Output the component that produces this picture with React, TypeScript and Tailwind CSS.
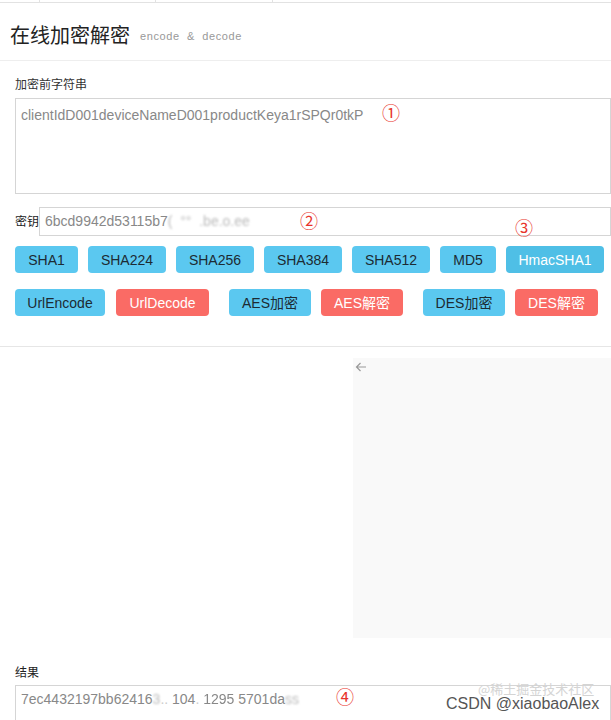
import React from 'react';

const font = { fontFamily: '"Liberation Sans", Arial, "Noto Sans CJK SC", sans-serif' };

type Btn = { label: string; tone: 'info' | 'danger' | 'active'; w: string; ml?: string };

const row1: Btn[] = [
  { label: 'SHA1', tone: 'info', w: 'w-[63px]' },
  { label: 'SHA224', tone: 'info', w: 'w-[78px]' },
  { label: 'SHA256', tone: 'info', w: 'w-[78px]' },
  { label: 'SHA384', tone: 'info', w: 'w-[78px]' },
  { label: 'SHA512', tone: 'info', w: 'w-[78px]' },
  { label: 'MD5', tone: 'info', w: 'w-[56px]' },
  { label: 'HmacSHA1', tone: 'active', w: 'w-[98px]' },
];

const row2: Btn[] = [
  { label: 'UrlEncode', tone: 'info', w: 'w-[90px]' },
  { label: 'UrlDecode', tone: 'danger', w: 'w-[93px]', ml: 'ml-[11px]' },
  { label: 'AES加密', tone: 'info', w: 'w-[82px]', ml: 'ml-[20px]' },
  { label: 'AES解密', tone: 'danger', w: 'w-[82px]', ml: 'ml-[10px]' },
  { label: 'DES加密', tone: 'info', w: 'w-[82px]', ml: 'ml-[20px]' },
  { label: 'DES解密', tone: 'danger', w: 'w-[83px]', ml: 'ml-[10px]' },
];

function ActionButton({ b, first }: { b: Btn; first?: boolean }) {
  const tone =
    b.tone === 'danger'
      ? 'bg-[#fa6b65] text-white'
      : b.tone === 'active'
        ? 'bg-[#4fbfe6] text-white'
        : 'bg-[#5bc8f0] text-[#1d2b33]';
  return (
    <button
      type="button"
      className={`h-[27px] shrink-0 rounded-[4px] text-[14px] leading-none ${b.w} ${tone} ${first ? '' : b.ml ?? 'ml-[10px]'}`}
    >
      {b.label}
    </button>
  );
}

function Circled({ n, className }: { n: string; className: string }) {
  return (
    <span className={`absolute text-[18px] leading-none text-[#e8342b] ${className}`} style={{ fontFamily: '"Noto Sans CJK SC", sans-serif' }}>
      {n}
    </span>
  );
}

export default function App() {
  return (
    <div className="relative h-[720px] w-[611px] overflow-hidden bg-white text-[#333]" style={font}>
      {/* tab strip remnant */}
      <div className="flex h-[3px] border-b border-[#e2e2e2]">
        <div className="w-[40px] border-r border-[#e2e2e2]" />
        <div className="w-[116px] border-r border-[#e2e2e2]" />
        <div className="w-[117px] border-r border-[#e2e2e2]" />
      </div>

      {/* header */}
      <div className="flex h-[58px] items-end border-b border-[#eeeeee] pb-[15px] pl-[10px]">
        <span className="text-[20px] leading-none text-[#222]" style={{ fontFamily: '"Noto Sans CJK SC", sans-serif' }}>
          在线加密解密
        </span>
        <span className="ml-[10px] pb-[3px] text-[11px] leading-none tracking-[0.6px] text-[#999]">encode &nbsp;&amp;&nbsp; decode</span>
      </div>

      {/* source text */}
      <div className="relative pl-[15px] pt-[18px]">
        <div className="text-[12px] leading-none text-[#333]">加密前字符串</div>
        <div className="mt-[7px] h-[96px] border border-[#d5d5d5] px-[5px] pt-[6px] text-[14px] text-[#888]">
          clientIdD001deviceNameD001productKeya1rSPQr0tkP
        </div>
        <Circled n="①" className="left-[382px] top-[42px]" />
      </div>

      {/* key */}
      <div className="relative mt-[13px] flex items-center pl-[15px]">
        <span className="text-[12px] text-[#222]">密钥</span>
        <div className="flex h-[29px] flex-1 items-center border border-[#d5d5d5] pl-[5px] text-[14px] text-[#888]">
          6bcd9942d53115b7<span className="blur-[1px] text-[#bbb]">( &nbsp;°°&nbsp; .be.o.ee</span>
        </div>
        <Circled n="②" className="left-[300px] top-[4px]" />
        <Circled n="③" className="left-[515px] top-[11px]" />
      </div>

      {/* buttons */}
      <div className="mt-[10px] flex pl-[15px]">
        {row1.map((b, i) => (
          <ActionButton key={b.label} b={b} first={i === 0} />
        ))}
      </div>
      <div className="mt-[16px] flex border-b border-[#e6e6e6] pb-[30px] pl-[15px]">
        {row2.map((b, i) => (
          <ActionButton key={b.label} b={b} first={i === 0} />
        ))}
      </div>

      {/* empty area with grey panel */}
      <div className="flex h-[320px] pt-[11px]">
        <div className="w-[353px]" />
        <div className="relative h-[280px] flex-1 bg-[#f9f9f9]">
          <svg className="absolute left-[2px] top-[3px]" width="12" height="12" viewBox="0 0 12 12" fill="none" stroke="#999" strokeWidth="1.2">
            <path d="M11 6H1.5M5.5 2L1.5 6l4 4" />
          </svg>
        </div>
      </div>

      {/* result */}
      <div className="relative pl-[15px]">
        <div className="text-[12px] leading-none text-[#222]">结果</div>
        <div className="mt-[6px] h-[40px] border border-[#d5d5d5] pl-[5px] pt-[3px] text-[14px] text-[#888]">
          7ec4432197bb62416<span className="blur-[1px] text-[#bbb]">3</span>
          <span className="text-[#ccc]">.. </span>104<span className="text-[#ccc]">. </span>
          <span className="blur-[0.5px]">1295</span>
          <span className="text-[#ccc]"> </span>5701da<span className="blur-[1px] text-[#bbb]">ss</span>
        </div>
        <Circled n="④" className="left-[336px] top-[20px]" />
        <span
          className="absolute left-[478px] top-[15px] text-[13px] leading-none text-[#d4d4d4]"
          style={{ fontFamily: '"Noto Sans CJK SC", sans-serif' }}
        >
          @稀土掘金技术社区
        </span>
        <span className="absolute left-[446px] top-[29px] text-[16px] leading-none text-[#555]">CSDN @xiaobaoAlex</span>
      </div>
    </div>
  );
}
